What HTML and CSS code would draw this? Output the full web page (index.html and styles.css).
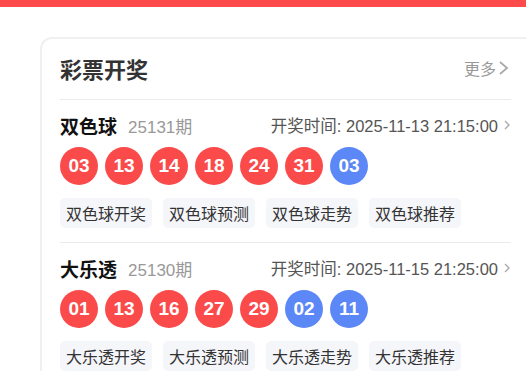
FILE: index.html
```html
<!DOCTYPE html>
<html lang="zh-CN">
<head>
    <meta charset="UTF-8">
    <meta name="viewport" content="width=device-width, initial-scale=1.0">
    <title>彩票开奖</title>
    <link rel="stylesheet" href="styles.css">
</head>
<body>
    <div class="top-bar"></div>

    <div class="page">
        <div class="lottery-card">
            <!-- Header -->
            <div class="card-header">
                <h2 class="card-title">彩票开奖</h2>
                <a class="more-link" href="#">更多<svg class="chevron-lg" viewBox="0 0 14 16"><path d="M3 2 L10 8 L3 14" /></svg></a>
            </div>

            <!-- 双色球 -->
            <div class="lottery-row">
                <div class="row-head">
                    <span class="game-name">双色球</span>
                    <span class="issue">25131期</span>
                    <span class="draw-time">开奖时间: 2025-11-13 21:15:00<svg class="chevron-sm" viewBox="0 0 8 12"><path d="M2 2 L6 6 L2 10" /></svg></span>
                </div>
                <div class="balls">
                    <span class="ball red">03</span>
                    <span class="ball red">13</span>
                    <span class="ball red">14</span>
                    <span class="ball red">18</span>
                    <span class="ball red">24</span>
                    <span class="ball red">31</span>
                    <span class="ball blue">03</span>
                </div>
                <div class="tags">
                    <a class="tag" href="#">双色球开奖</a>
                    <a class="tag" href="#">双色球预测</a>
                    <a class="tag" href="#">双色球走势</a>
                    <a class="tag" href="#">双色球推荐</a>
                </div>
            </div>

            <!-- 大乐透 -->
            <div class="lottery-row">
                <div class="row-head">
                    <span class="game-name">大乐透</span>
                    <span class="issue">25130期</span>
                    <span class="draw-time">开奖时间: 2025-11-15 21:25:00<svg class="chevron-sm" viewBox="0 0 8 12"><path d="M2 2 L6 6 L2 10" /></svg></span>
                </div>
                <div class="balls">
                    <span class="ball red">01</span>
                    <span class="ball red">13</span>
                    <span class="ball red">16</span>
                    <span class="ball red">27</span>
                    <span class="ball red">29</span>
                    <span class="ball blue">02</span>
                    <span class="ball blue">11</span>
                </div>
                <div class="tags">
                    <a class="tag" href="#">大乐透开奖</a>
                    <a class="tag" href="#">大乐透预测</a>
                    <a class="tag" href="#">大乐透走势</a>
                    <a class="tag" href="#">大乐透推荐</a>
                </div>
            </div>
        </div>
    </div>
</body>
</html>
```

FILE: styles.css
```css
* {
    box-sizing: border-box;
    margin: 0;
    padding: 0;
}

html, body {
    overflow: hidden;
}

body {
    font-family: "Liberation Sans", Arial, "Noto Sans CJK SC", sans-serif;
    background-color: #fff;
    color: #333;
}

a {
    text-decoration: none;
    color: inherit;
}

.top-bar {
    height: 7px;
    background: #fd4a4a;
}

.page {
    padding: 30px 0 0 40px;
}

.lottery-card {
    width: 495px;
    border: 2px solid #f0f0f0;
    border-right: none;
    border-radius: 12px 0 0 12px;
    padding: 14px 0 0 18px;
}

.lottery-card > * {
    width: 451px;
}

/* Header */
.card-header {
    display: flex;
    align-items: center;
    justify-content: space-between;
    height: 30px;
    margin-bottom: 16px;
}

.card-title {
    font-size: 22px;
    font-weight: bold;
    color: #333;
    font-family: "Noto Sans CJK SC", sans-serif;
    line-height: 30px;
}

.more-link {
    display: flex;
    align-items: center;
    font-size: 16px;
    color: #999;
    font-family: "Noto Sans CJK SC", sans-serif;
}

.chevron-lg {
    width: 14px;
    height: 16px;
    margin-left: 1px;
    fill: none;
    stroke: #aaa;
    stroke-width: 1.8;
}

/* Rows */
.lottery-row {
    border-top: 1px solid #ebebeb;
    padding: 14px 0 14px;
}

.row-head {
    display: flex;
    align-items: center;
    height: 22px;
    margin-bottom: 11px;
}

.game-name {
    font-size: 19px;
    font-weight: bold;
    color: #111;
    font-family: "Noto Sans CJK SC", sans-serif;
}

.issue {
    margin-left: 11px;
    font-size: 17px;
    color: #999;
}

.draw-time {
    margin-left: auto;
    display: flex;
    align-items: center;
    font-size: 16.5px;
    color: #555;
}

.chevron-sm {
    width: 8px;
    height: 12px;
    margin-left: 5px;
    fill: none;
    stroke: #aaa;
    stroke-width: 1.4;
}

.balls {
    display: flex;
    gap: 7px;
    margin-bottom: 13px;
}

.ball {
    width: 38px;
    height: 38px;
    border-radius: 50%;
    display: flex;
    align-items: center;
    justify-content: center;
    color: #fff;
    font-size: 19px;
    font-weight: bold;
}

.ball.red {
    background: #fb4a4a;
}

.ball.blue {
    background: #5b87f7;
}

.tags {
    display: flex;
    gap: 11px;
}

.tag {
    height: 30px;
    padding: 0 6px;
    display: flex;
    align-items: center;
    background: #f5f6fa;
    border-radius: 5px;
    font-size: 16px;
    color: #333;
    font-family: "Noto Sans CJK SC", sans-serif;
}
```
